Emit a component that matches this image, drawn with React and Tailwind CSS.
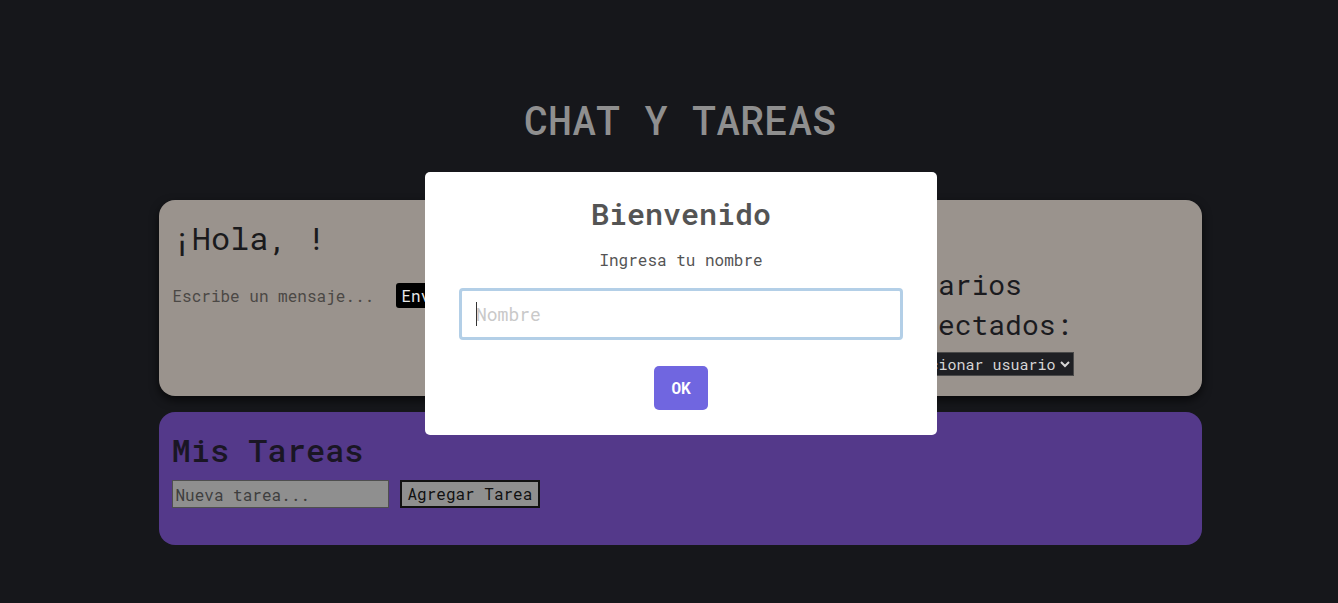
import React from "react";

const mono = "font-['Roboto_Mono','Liberation_Mono',monospace]";

function ChatCard() {
  return (
    <div className="flex w-[1043px] h-[196px] rounded-2xl bg-[#9a938d] pl-[14px] pr-[14px] pt-4 shadow-[0_4px_10px_rgba(0,0,0,0.65)]">
      <div className="flex-1 flex flex-col">
        <h1 className="text-[32px] leading-10 mt-[2px] text-[#1a1a1c]">¡Hola, !</h1>
        <div className="flex items-center mt-[25px] h-[25px]">
          <input
            className={`${mono} w-[217px] bg-transparent outline-none text-[16px] placeholder:text-[#4b4845]`}
            placeholder="Escribe un mensaje..."
          />
          <button className="ml-[6px] h-[25px] px-[6px] bg-black text-[#e8e8e8] text-[16px] rounded-[3px]">
            Enviar
          </button>
        </div>
      </div>
      <div className="w-[302px] flex flex-col pt-[49px] pl-[2px]">
        <h2 className="text-[28px] leading-10 text-[#1b1b1f] w-[200px]">Usuarios conectados:</h2>
        <div className="mt-[7px]">
          <select className={`${mono} h-[24px] bg-[#1f2024] border border-[#4a4a4a] text-[#d6d6d6] text-[15px] pl-[2px] outline-none -ml-[10px]`}>
            <option>Seleccionar usuario</option>
          </select>
        </div>
      </div>
    </div>
  );
}

function TasksCard() {
  return (
    <div className="w-[1043px] h-[133px] rounded-2xl bg-[#54398a] pl-[13px] pt-[18px]">
      <h2 className="text-[32px] leading-10 font-medium text-[#1a1624]">Mis Tareas</h2>
      <div className="flex items-center gap-[11px] mt-[10px]">
        <input
          className={`${mono} w-[217px] h-[28px] bg-[#8f8f8f] border border-[#4f4f4f] px-[3px] text-[16px] outline-none placeholder:text-[#3e3e3e]`}
          placeholder="Nueva tarea..."
        />
        <button className="h-[28px] px-[6px] bg-[#8f8f8f] border-2 border-[#111] text-[#111] text-[16px]">
          Agregar Tarea
        </button>
      </div>
    </div>
  );
}

function WelcomeModal() {
  return (
    <div className="fixed inset-0 flex items-center justify-center pl-6 pt-[4px]">
      <div className="w-[512px] h-[263px] bg-white rounded-[5px] flex flex-col items-center pt-6 pb-[25px]">
        <h2 className="text-[30px] leading-9 font-semibold text-[#545454]">Bienvenido</h2>
        <p className="mt-4 text-[16px] leading-6 text-[#545454]">Ingresa tu nombre</p>
        <div className="relative mt-4 w-[444px] h-[52px]">
          <input
            className={`${mono} w-full h-full border-[3px] border-[#b3cfe7] rounded-[4px] pl-[14px] text-[18px] outline-none placeholder:text-[#c9c9c9]`}
            placeholder="Nombre"
          />
          <span className="absolute left-[17px] top-[14px] w-px h-[24px] bg-[#333]" />
        </div>
        <button className="mt-[26px] w-[54px] h-[44px] rounded-[5px] bg-[#7066e0] text-white font-bold text-[16px]">
          OK
        </button>
      </div>
    </div>
  );
}

export default function App() {
  return (
    <div className={`${mono} min-h-[603px] bg-[#16171b] pl-[22px] overflow-hidden`}>
      <div className="flex flex-col items-center pt-[96px]">
        <h1 className="text-[40px] leading-[48px] font-medium text-[#8f8f8f]">CHAT Y TAREAS</h1>
        <div className="mt-[56px] flex flex-col gap-4">
          <ChatCard />
          <TasksCard />
        </div>
      </div>
      <WelcomeModal />
    </div>
  );
}
